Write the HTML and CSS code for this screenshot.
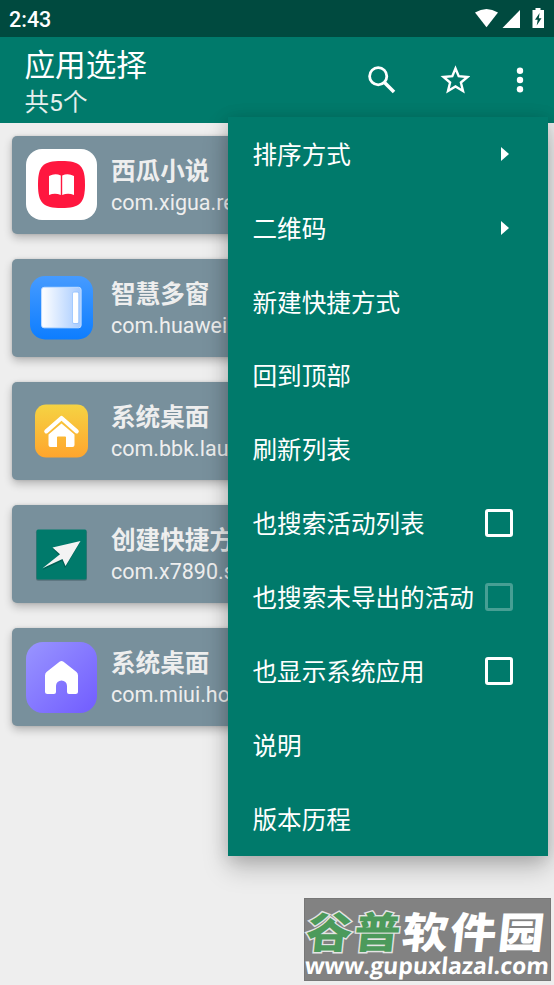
FILE: index.html
```html
<!DOCTYPE html>
<html lang="zh-CN">
<head>
<meta charset="utf-8">
<title>应用选择</title>
<link rel="stylesheet" href="styles.css">
</head>
<body>
<div class="screen">
  <div class="status">
    <span class="clock">2:43</span>
    <svg class="status-icons" width="72" height="22" viewBox="0 0 72 22" fill="#fff">
      <path d="M1 4.500Q12.500 -2.500 24 4.500L12.500 19.200Z"/>
      <path d="M46 2V20H28.500Z"/>
      <path fill-rule="evenodd" d="M61.500 0H66.500V2H70V20H58.500V2H61.500ZM65.600 5L61 11.700H63.700L62.700 17.500L67.500 10.300H64.800Z"/>
    </svg>
  </div>
  <header class="toolbar">
    <div class="heading">
      <h1>应用选择</h1>
      <p>共5个</p>
    </div>
    <svg class="search" width="28" height="28" viewBox="0 0 28 28" fill="none" stroke="#fff">
      <circle cx="10.200" cy="10.200" r="8.600" stroke-width="2.800"/>
      <path d="M16.500 16.500L26 26" stroke-width="3.500"/>
    </svg>
    <svg class="star" width="30" height="30" viewBox="0 0 30 30" fill="none" stroke="#fff" stroke-width="2.400">
      <path d="M15.500 3.500L18.700 11.200L27.500 12L20.900 17.500L23 26L15.500 21.500L8 26L10.100 17.500L3.500 12L12.300 11.200Z"/>
    </svg>
    <svg class="more" width="8" height="26" viewBox="0 0 8 26" fill="#fff">
      <circle cx="4" cy="3.800" r="3.200"/><circle cx="4" cy="13" r="3.200"/><circle cx="4" cy="22.200" r="3.200"/>
    </svg>
  </header>
  <main class="list">
    <article class="card">
      <svg class="icon" viewBox="0 0 71 71">
        <rect width="71" height="71" rx="16" fill="#fff"/>
        <path d="M35.500 12C54 12 59 17 59 35.500S54 59 35.500 59S12 54 12 35.500S17 12 35.500 12Z" fill="#ff173f"/>
        <path d="M23 27Q29 24 34.800 26.500V46Q29 43.500 23 46ZM36.200 26.500Q42 24 48 27V46Q42 43.500 36.200 46Z" fill="#fff"/>
      </svg>
      <div class="info"><h2>西瓜小说</h2><p>com.xigua.re</p></div>
    </article>
    <article class="card">
      <svg class="icon" viewBox="0 0 71 71">
        <defs>
          <linearGradient id="blue" x2="0" y2="1"><stop stop-color="#469bff"/><stop offset="1" stop-color="#0d7dff"/></linearGradient>
          <linearGradient id="pane"><stop stop-color="#fff"/><stop offset="1" stop-color="#a5caff"/></linearGradient>
        </defs>
        <rect x="4" y="4" width="63" height="63.500" rx="15" fill="url(#blue)"/>
        <rect x="15.600" y="15.300" width="39.500" height="40.500" rx="2.500" fill="url(#pane)" stroke="#c4deff" stroke-width="1"/>
        <rect x="46.200" y="19.500" width="7" height="32.500" rx="2" fill="#77b3ff" opacity=".4"/>
        <rect x="47" y="20.500" width="5.300" height="30.500" rx="1" fill="#fff"/>
      </svg>
      <div class="info"><h2>智慧多窗</h2><p>com.huawei</p></div>
    </article>
    <article class="card">
      <svg class="icon" viewBox="0 0 71 71">
        <defs><linearGradient id="gold" x2="0" y2="1"><stop stop-color="#f5d343"/><stop offset="1" stop-color="#ffa52d"/></linearGradient></defs>
        <rect x="9" y="9.500" width="53" height="53" rx="11" fill="url(#gold)"/>
        <path d="M20.300 36.300L35.500 23L50.700 36.300" fill="none" stroke="#fff" stroke-width="4.200" stroke-linecap="round" stroke-linejoin="round"/>
        <path d="M22.500 39.500L35.500 28.500L48.500 39.500V50Q48.500 52 46.500 52H40V42Q40 41.500 39 41.500H32Q31 41.500 31 42V52H24.500Q22.500 52 22.500 50Z" fill="#fff"/>
      </svg>
      <div class="info"><h2>系统桌面</h2><p>com.bbk.lau</p></div>
    </article>
    <article class="card">
      <svg class="icon" viewBox="0 0 71 71">
        <rect x="10" y="11.300" width="51" height="50.500" rx="2" fill="#465f68" opacity=".65"/>
        <rect x="10.500" y="10.500" width="50" height="50" rx="1.500" fill="#007a6b"/>
        <path d="M17 50L33.500 35.300L27 28.500L54.500 22.500L39.500 48L36.500 41Z" fill="#004e45" opacity=".6" transform="translate(-.5 1)"/>
        <path d="M16.500 49.300L34 35.300L26.500 28.500L54.500 22L39.500 47L36.500 40Z" fill="#f3f3f3"/>
      </svg>
      <div class="info"><h2>创建快捷方</h2><p>com.x7890.s</p></div>
    </article>
    <article class="card">
      <svg class="icon" viewBox="0 0 71 71">
        <defs><linearGradient id="violet" x2="1" y2="1"><stop stop-color="#9995ff"/><stop offset="1" stop-color="#715cff"/></linearGradient></defs>
        <rect width="71" height="71" rx="17" fill="url(#violet)"/>
        <path d="M33.500 19.800Q35.500 18 37.500 19.800L50.500 30Q52 31.300 52 33.500V49.500Q52 52 49.500 52H43Q41 52 41 50V44A5.500 5.500 0 0 0 30 44V50Q30 52 28 52H21.500Q19 52 19 49.500V33.500Q19 31.300 20.500 30Z" fill="#fff"/>
      </svg>
      <div class="info"><h2>系统桌面</h2><p>com.miui.ho</p></div>
    </article>
  </main>
  <nav class="menu">
    <div class="item"><span>排序方式</span><i class="arrow"></i></div>
    <div class="item"><span>二维码</span><i class="arrow"></i></div>
    <div class="item"><span>新建快捷方式</span></div>
    <div class="item"><span>回到顶部</span></div>
    <div class="item"><span>刷新列表</span></div>
    <div class="item"><span>也搜索活动列表</span><i class="check"></i></div>
    <div class="item"><span>也搜索未导出的活动</span><i class="check disabled"></i></div>
    <div class="item"><span>也显示系统应用</span><i class="check"></i></div>
    <div class="item"><span>说明</span></div>
    <div class="item"><span>版本历程</span></div>
  </nav>
  <aside class="watermark">
    <div class="brand"><b>谷普</b><span>软件园</span></div>
    <div class="site">www.gupuxlazal.com</div>
  </aside>
</div>
</body>
</html>
```
FILE: styles.css
```css
* { box-sizing: border-box; }
body, h1, h2, p { margin: 0; }
body { background: #eee; font-family: Roboto, "Noto Sans CJK SC", sans-serif; color: #fff; }
.screen { position: relative; width: 554px; height: 985px; overflow: hidden; background: #eee; }
.status { height: 37px; background: #004a3f; display: flex; align-items: flex-start; justify-content: space-between; padding: 8px 8px 0 9px; }
.clock { font-size: 21.500px; line-height: 24px; font-weight: 500; }
.toolbar { height: 86px; background: #007a6b; display: flex; align-items: center; padding: 0 30px 0 24.500px; }
.heading { flex: 1; align-self: stretch; padding-top: 10px; }
.heading h1 { font-size: 30.600px; line-height: 38px; font-weight: 400; }
.heading p { font-size: 24.600px; line-height: 30px; padding-top: 3px; height: 34px; font-weight: 400; color: #e6efed; }
.search { margin-right: 44px; }
.star { margin-right: 46px; }
.list { padding: 12.500px 12px; display: flex; flex-direction: column; gap: 24.600px; }
.card { height: 98.500px; background: #78909c; border-radius: 5px; box-shadow: 0 4px 9px rgba(0,0,0,.24), 0 0 3px rgba(0,0,0,.12); padding: 0 14px; display: flex; align-items: center; gap: 14px; color: #eee; overflow: hidden; }
.icon { width: 71px; height: 71px; flex: none; }
.info { white-space: nowrap; padding-top: 2px; }
.info h2 { font-size: 24.600px; line-height: 33px; font-weight: 700; }
.info p { font-size: 21.500px; line-height: 29px; }
.menu { position: absolute; left: 228px; top: 117px; width: 320px; height: 739px; background: #007a6b; box-shadow: 0 12px 24px rgba(0,0,0,.22), 0 2px 16px rgba(0,0,0,.14); display: flex; flex-direction: column; }
.item { flex: 1; display: flex; align-items: center; justify-content: space-between; padding: 0 35px 0 24.500px; font-size: 24.600px; white-space: nowrap; }
.item span { padding-bottom: 2.500px; }
.arrow { border-left: 8px solid #fff; border-top: 7.500px solid transparent; border-bottom: 7.500px solid transparent; margin-right: 4px; }
.check { width: 28px; height: 28px; border: 3px solid #fff; border-radius: 3px; }
.disabled { opacity: .28; }
.watermark { position: absolute; left: 304px; top: 898px; width: 247px; height: 83px; background: #828282; border: 1px solid #777; }
.brand { display: flex; height: 53px; padding: 4px 0 0 2px; font: 900 46px/54px "Noto Sans CJK SC", sans-serif; letter-spacing: 2px; transform: skewX(-6deg) scaleY(.92); white-space: nowrap; }
.brand b { color: #4c9a5b; -webkit-text-stroke: 3px #e4e4e4; paint-order: stroke fill; }
.site { font: 700 23px/26px "Open Sans", "Noto Sans", sans-serif; white-space: nowrap; letter-spacing: -.05px; transform: skewX(-5deg); }
```
